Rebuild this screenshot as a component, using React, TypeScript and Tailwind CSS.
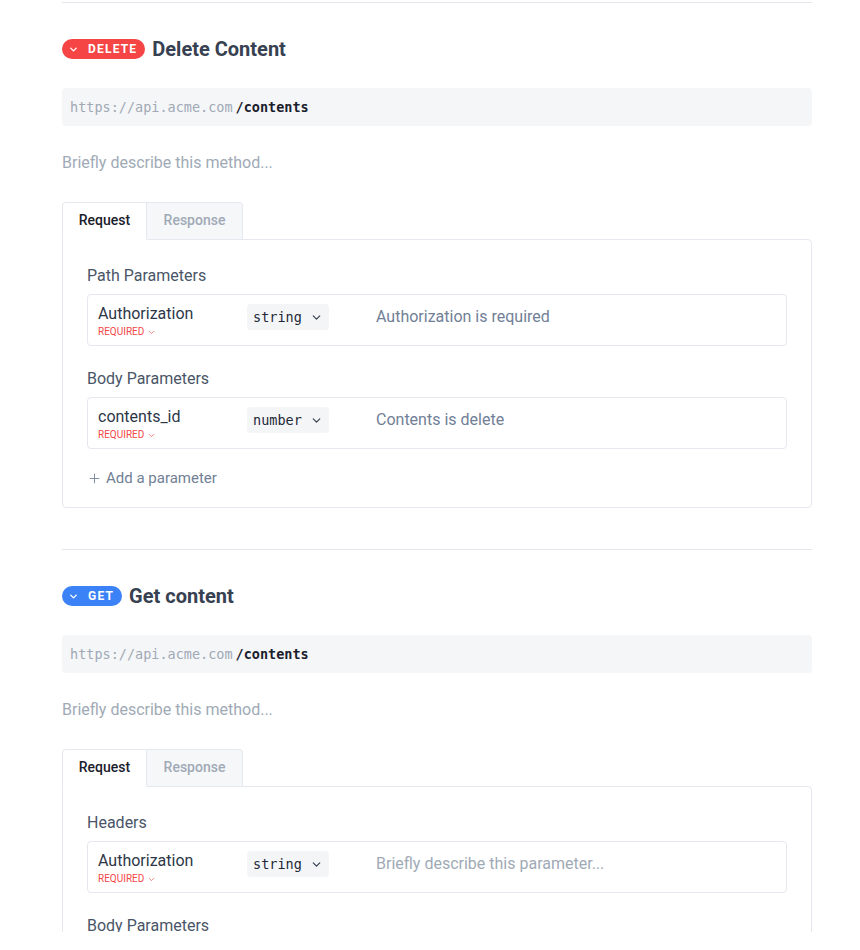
import { ChevronDown, Plus } from "lucide-react";

type Param = {
  name: string;
  type: string;
  desc: string;
  placeholder?: boolean;
};

type Group = {
  title: string;
  params: Param[];
};

type Endpoint = {
  method: "DELETE" | "GET";
  title: string;
  groups: Group[];
  addButton?: boolean;
};

const endpoints: Endpoint[] = [
  {
    method: "DELETE",
    title: "Delete Content",
    groups: [
      { title: "Path Parameters", params: [{ name: "Authorization", type: "string", desc: "Authorization is required" }] },
      { title: "Body Parameters", params: [{ name: "contents_id", type: "number", desc: "Contents is delete" }] },
    ],
    addButton: true,
  },
  {
    method: "GET",
    title: "Get content",
    groups: [
      {
        title: "Headers",
        params: [{ name: "Authorization", type: "string", desc: "Briefly describe this parameter...", placeholder: true }],
      },
      // the rest of this panel is below the fold
      { title: "Body Parameters", params: [] },
    ],
  },
];

const mono = { fontFamily: '"DejaVu Sans Mono", "Liberation Mono", monospace' };

function MethodBadge({ method }: { method: Endpoint["method"] }) {
  const color = method === "DELETE" ? "bg-[#f54545]" : "bg-[#3b82f6]";
  return (
    <span className={`${color} flex h-5 items-center rounded-full pl-[6px] pr-[8px] text-white`}>
      <ChevronDown size={11} strokeWidth={3} />
      <span className="ml-[9px] text-[12px] font-bold leading-none tracking-[0.1em]">{method}</span>
    </span>
  );
}

function ParamRow({ param }: { param: Param }) {
  return (
    <div className="flex items-start rounded border border-[#e5e8ee] px-[10px] pt-[9px] pb-[7px]">
      <div className="w-[149px] shrink-0">
        <div className="text-[16px] leading-[20px] text-[#2d3748]">{param.name}</div>
        <div className="mt-[2px] flex items-center text-[10px] leading-[12px] text-[#f24848]">
          REQUIRED
          <ChevronDown size={9} strokeWidth={1.8} className="ml-[3px]" />
        </div>
      </div>
      <div
        className="flex h-[26px] w-[82px] shrink-0 items-center rounded bg-[#f4f5f7] pl-[6px] text-[13.5px] text-[#1f2937]"
        style={mono}
      >
        <span>{param.type}</span>
        <ChevronDown size={13} strokeWidth={2.2} className="ml-[8px] text-[#374151]" />
      </div>
      <div
        className={`ml-[47px] text-[16px] leading-[26px] ${param.placeholder ? "text-[#a0aab6]" : "text-[#718096]"}`}
      >
        {param.desc}
      </div>
    </div>
  );
}

function EndpointSection({ ep }: { ep: Endpoint }) {
  return (
    <section className="border-t border-[#e4e8ee] pt-8 pb-[41px]">
      <div className="flex h-7 items-center gap-[7px]">
        <MethodBadge method={ep.method} />
        <h2 className="text-[20px] font-bold leading-7 text-[#374151]">{ep.title}</h2>
      </div>

      <div className="mt-[25px] flex h-[38px] items-center rounded-sm bg-[#f5f6f8] px-2 text-[13.5px]" style={mono}>
        <span className="text-[#a0a9b5]">https://api.acme.com</span>
        <span className="ml-[3px] font-bold text-[#1a202c]">/contents</span>
      </div>

      <p className="mt-[25px] text-[16px] leading-6 text-[#a0aab6]">Briefly describe this method...</p>

      <div className="mt-[27px]">
        <div className="relative z-10 -mb-px flex">
          <button className="h-[38px] w-[85px] rounded-tl border-l border-t border-r border-[#e5e8ee] border-b border-b-white bg-white pb-px text-[14px] font-medium text-[#1a202c]">
            Request
          </button>
          <button className="h-[38px] w-[96px] rounded-tr border-t border-r border-b border-[#e5e8ee] bg-[#f6f7f9] pb-px text-[14px] font-medium text-[#a0aab6]">
            Response
          </button>
        </div>
        <div className="rounded-b rounded-tr border border-[#e5e8ee] px-6 pt-6 pb-[17px]">
          {ep.groups.map((g, i) => (
            <div key={g.title} className={i > 0 ? "mt-[21px]" : ""}>
              <div className="mb-[6px] text-[16px] leading-6 text-[#4a5568]">{g.title}</div>
              {g.params.map((p) => (
                <ParamRow key={p.name} param={p} />
              ))}
            </div>
          ))}
          {ep.addButton && (
            <div className="mt-[17px] flex items-center text-[15px] leading-6 text-[#718096]">
              <Plus size={15} strokeWidth={1.4} className="mr-[4px]" />
              Add a parameter
            </div>
          )}
        </div>
      </div>
    </section>
  );
}

export default function App() {
  return (
    <div className="h-[932px] overflow-hidden bg-white" style={{ fontFamily: 'Roboto, "Noto Sans", sans-serif' }}>
      <div className="ml-[62px] w-[750px] pt-[2px]">
        {endpoints.map((ep) => (
          <EndpointSection key={ep.title} ep={ep} />
        ))}
      </div>
    </div>
  );
}
